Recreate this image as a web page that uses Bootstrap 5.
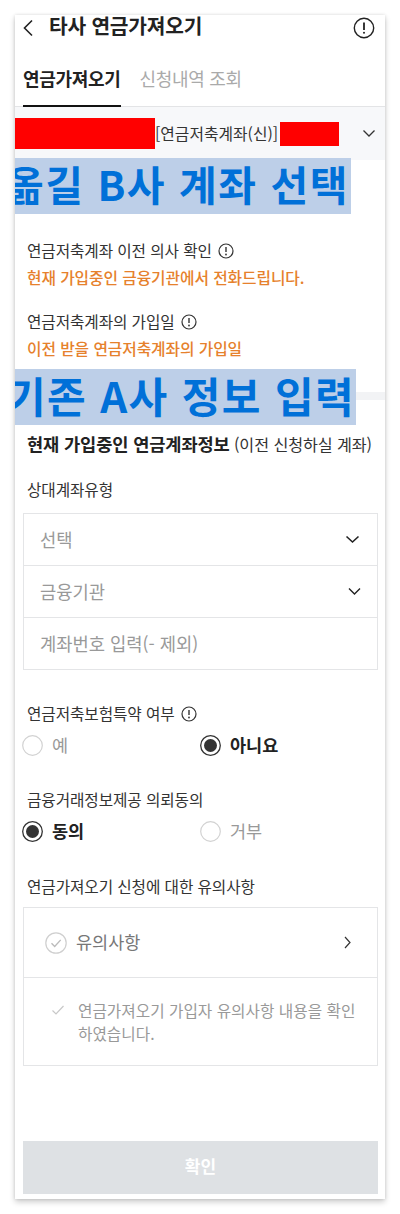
<!DOCTYPE html>
<html lang="ko">
<head>
<meta charset="utf-8">
<meta name="viewport" content="width=device-width, initial-scale=1">
<title>타사 연금가져오기</title>
<link href="https://cdn.jsdelivr.net/npm/bootstrap@5.3.0/dist/css/bootstrap.min.css" rel="stylesheet">
<style>
html,body{height:100%;}
body{background:#fff;font-family:"Noto Sans CJK KR","Liberation Sans",sans-serif;color:#333;overflow:hidden;padding:15px 15px 0;}
.phone{width:370px;height:1184px;background:#fff;box-shadow:0 3px 6px rgba(0,0,0,.2),0 0 3px rgba(0,0,0,.12);}
.topbar{height:25px;padding:0 10px 0 6px;}
.topbar h1{font-size:20.300px;font-weight:700;color:#222;margin:0 0 4px 14px;line-height:21px;letter-spacing:-.2px;}
.tabrow{height:67px;border-bottom:1px solid #e3e4e6;padding:0 8px;gap:19px;}
.tabitem{font-size:18px;line-height:26px;padding:12px 0 14px;color:#aaa;border-bottom:2px solid transparent;margin-bottom:-1px;letter-spacing:-.3px;}
.tabitem.on{color:#222;font-weight:700;border-bottom-color:#111;}
.acct{height:53px;background:#f7f8fa;padding-right:9px;font-size:15.800px;color:#333;}
.redlong{width:140px;height:31px;background:#f00;}
.redshort{width:59px;height:24px;background:#f00;margin-left:2px;}
.hl{background:#bdcfe8;color:#0070d8;font-weight:700;font-size:41px;line-height:50px;height:56px;overflow:hidden;white-space:nowrap;}
.hl-b{width:336px;margin-top:-2px;letter-spacing:1.500px;text-indent:-9px;position:relative;}
.hl-a{width:341px;position:absolute;left:0;top:-23px;font-size:42px;line-height:52px;letter-spacing:1.400px;text-indent:-8px;}
.lbl{font-size:15.700px;line-height:22px;color:#333;margin:0;padding-left:12px;letter-spacing:-.1px;}
.orange{font-size:15.800px;line-height:22px;color:#e6812c;font-weight:500;margin:0;padding-left:12px;letter-spacing:-.1px;}
.bandwrap{position:relative;height:8px;background:#f2f3f5;margin-top:32px;flex:none;}
.strong-t{font-size:17.600px;font-weight:700;color:#222;}
.strong-s{font-size:16.200px;font-weight:400;color:#333;}
.fieldbox{margin:0 7px 0 8px;border:1px solid #e4e5e7;}
.fieldrow{height:52px;padding:0 17px 0 16px;font-size:17.700px;color:#999;border-bottom:1px solid #e4e5e7;}
.fieldrow:last-child{border-bottom:0;height:51px;}
.radio-i{width:21px;height:21px;flex:none;}
.opt{font-size:17.500px;color:#999;gap:9px;line-height:22px;}
.opt.sel{color:#222;font-weight:700;}
.optrow{padding-left:7px;height:22px;}
.optcell{width:178px;}
.notehead{height:70px;padding:0 26px 0 21px;font-size:17.500px;color:#777;border-bottom:1px solid #e4e5e7;gap:9px;}
.notebody{height:87px;padding:21px 20px 0 27px;font-size:15.700px;line-height:23px;color:#999;gap:13px;}
.okbtn{margin:0 7px 5px 8px;height:53px;width:355px;padding:0 0 4px;background:#dee1e4;color:#fff;font-size:17px;font-weight:700;border:0;border-radius:0;}
.okbtn:disabled{background:#dee1e4;color:#fff;opacity:1;border:0;}
.gap1{margin-top:26px}.gap2{margin-top:5px}.gap3{margin-top:22px}
.sect{margin-top:32px;line-height:24px}
.typ{margin-top:22px;margin-bottom:12px}
.ins{margin-top:33px}
.or1{margin-top:9px}.fin{margin-top:33px}.or2{margin-top:9px}
.nt{margin-top:34px;margin-bottom:9px}
.chev2{margin-right:-1px}
.ico{margin-left:6px;flex:none;}
</style>
</head>
<body>
<div class="phone d-flex flex-column">
  <div class="topbar d-flex align-items-center">
    <svg width="14" height="18" viewBox="0 0 14 18" fill="none" stroke="#222" stroke-width="1.600"><path d="M11 1.500 3.500 9l7.500 7.500"/></svg>
    <h1>타사 연금가져오기</h1>
    <svg class="ms-auto" width="22" height="22" viewBox="0 0 22 22" fill="none" stroke="#222"><circle cx="11" cy="11" r="9.700" stroke-width="1.400"/><path d="M11 5.500v7.500" stroke-width="1.800"/><circle cx="11" cy="15.800" r="1" fill="#222" stroke="none"/></svg>
  </div>
  <div class="tabrow d-flex align-items-end">
    <div class="tabitem on">연금가져오기</div>
    <div class="tabitem">신청내역 조회</div>
  </div>
  <div class="acct d-flex align-items-center">
    <span class="redlong"></span><span>[연금저축계좌(신)]</span><span class="redshort"></span>
    <svg class="ms-auto" width="14" height="9" viewBox="0 0 14 9" fill="none" stroke="#333" stroke-width="1.300"><path d="M1.500 1.500 7 7l5.500-5.500"/></svg>
  </div>
  <div class="hl hl-b">옮길 B사 계좌 선택</div>
  <div class="d-flex align-items-center lbl gap1">연금저축계좌 이전 의사 확인<svg class="ico" width="16" height="16" viewBox="0 0 16 16" fill="none" stroke="#333"><circle cx="8" cy="8" r="7" stroke-width="1.200"/><path d="M8 4v5" stroke-width="1.400"/><circle cx="8" cy="11.500" r=".9" fill="#333" stroke="none"/></svg></div>
  <p class="orange gap2">현재 가입중인 금융기관에서 전화드립니다.</p>
  <div class="d-flex align-items-center lbl gap3">연금저축계좌의 가입일<svg class="ico" width="16" height="16" viewBox="0 0 16 16" fill="none" stroke="#333"><circle cx="8" cy="8" r="7" stroke-width="1.200"/><path d="M8 4v5" stroke-width="1.400"/><circle cx="8" cy="11.500" r=".9" fill="#333" stroke="none"/></svg></div>
  <p class="orange gap2">이전 받을 연금저축계좌의 가입일</p>
  <div class="bandwrap"><div class="hl hl-a">기존 A사 정보 입력</div></div>
  <p class="lbl sect"><span class="strong-t">현재 가입중인 연금계좌정보</span> <span class="strong-s">(이전 신청하실 계좌)</span></p>
  <p class="lbl typ">상대계좌유형</p>
  <div class="fieldbox">
    <div class="fieldrow d-flex align-items-center justify-content-between">선택<svg width="15" height="9" viewBox="0 0 15 9" fill="none" stroke="#222" stroke-width="1.600"><path d="M1.500 1.500 7.500 7l6-5.500"/></svg></div>
    <div class="fieldrow d-flex align-items-center justify-content-between">금융기관<svg class="chev2" width="13" height="9" viewBox="0 0 13 9" fill="none" stroke="#222" stroke-width="1.400"><path d="M1 1.500 6.500 7 12 1.500"/></svg></div>
    <div class="fieldrow d-flex align-items-center">계좌번호 입력(- 제외)</div>
  </div>
  <div class="d-flex align-items-center lbl ins">연금저축보험특약 여부<svg class="ico" width="16" height="16" viewBox="0 0 16 16" fill="none" stroke="#333"><circle cx="8" cy="8" r="7" stroke-width="1.200"/><path d="M8 4v5" stroke-width="1.400"/><circle cx="8" cy="11.500" r=".9" fill="#333" stroke="none"/></svg></div>
  <div class="optrow d-flex or1">
    <div class="optcell opt d-flex align-items-center"><svg class="radio-i" viewBox="0 0 21 21" fill="none" stroke="#d2d2d2" stroke-width="1.200"><circle cx="10.500" cy="10.500" r="9.800"/></svg>예</div>
    <div class="optcell opt sel d-flex align-items-center"><svg class="radio-i" viewBox="0 0 21 21" fill="none" stroke="#333" stroke-width="1.300"><circle cx="10.500" cy="10.500" r="9.800"/><circle cx="10.500" cy="10.500" r="6.500" fill="#333" stroke="none"/></svg>아니요</div>
  </div>
  <p class="lbl fin">금융거래정보제공 의뢰동의</p>
  <div class="optrow d-flex or2">
    <div class="optcell opt sel d-flex align-items-center"><svg class="radio-i" viewBox="0 0 21 21" fill="none" stroke="#333" stroke-width="1.300"><circle cx="10.500" cy="10.500" r="9.800"/><circle cx="10.500" cy="10.500" r="6.500" fill="#333" stroke="none"/></svg>동의</div>
    <div class="optcell opt d-flex align-items-center"><svg class="radio-i" viewBox="0 0 21 21" fill="none" stroke="#d2d2d2" stroke-width="1.200"><circle cx="10.500" cy="10.500" r="9.800"/></svg>거부</div>
  </div>
  <p class="lbl nt">연금가져오기 신청에 대한 유의사항</p>
  <div class="fieldbox">
    <div class="notehead d-flex align-items-center"><svg width="22" height="22" viewBox="0 0 22 22" fill="none" stroke="#cfcfcf" stroke-width="1.200"><circle cx="11" cy="11" r="10.200"/><path d="M6.500 11.200l3.200 3.200 6-6.500" stroke="#bbb" stroke-width="1.400"/></svg>유의사항<svg class="ms-auto" width="7" height="13" viewBox="0 0 7 13" fill="none" stroke="#333" stroke-width="1.200"><path d="M1 1l5 5.500-5 5.500"/></svg></div>
    <div class="notebody d-flex"><svg class="flex-shrink-0 mt-1" width="14" height="14" viewBox="0 0 14 14" fill="none" stroke="#c8c8c8" stroke-width="1.200"><path d="M1.500 7.500l3.500 3.500 7.500-8"/></svg><span>연금가져오기 가입자 유의사항 내용을 확인 하였습니다.</span></div>
  </div>
  <button class="btn okbtn mt-auto" disabled>확인</button>
</div>
<script src="https://cdn.jsdelivr.net/npm/bootstrap@5.3.0/dist/js/bootstrap.bundle.min.js"></script>
</body>
</html>
